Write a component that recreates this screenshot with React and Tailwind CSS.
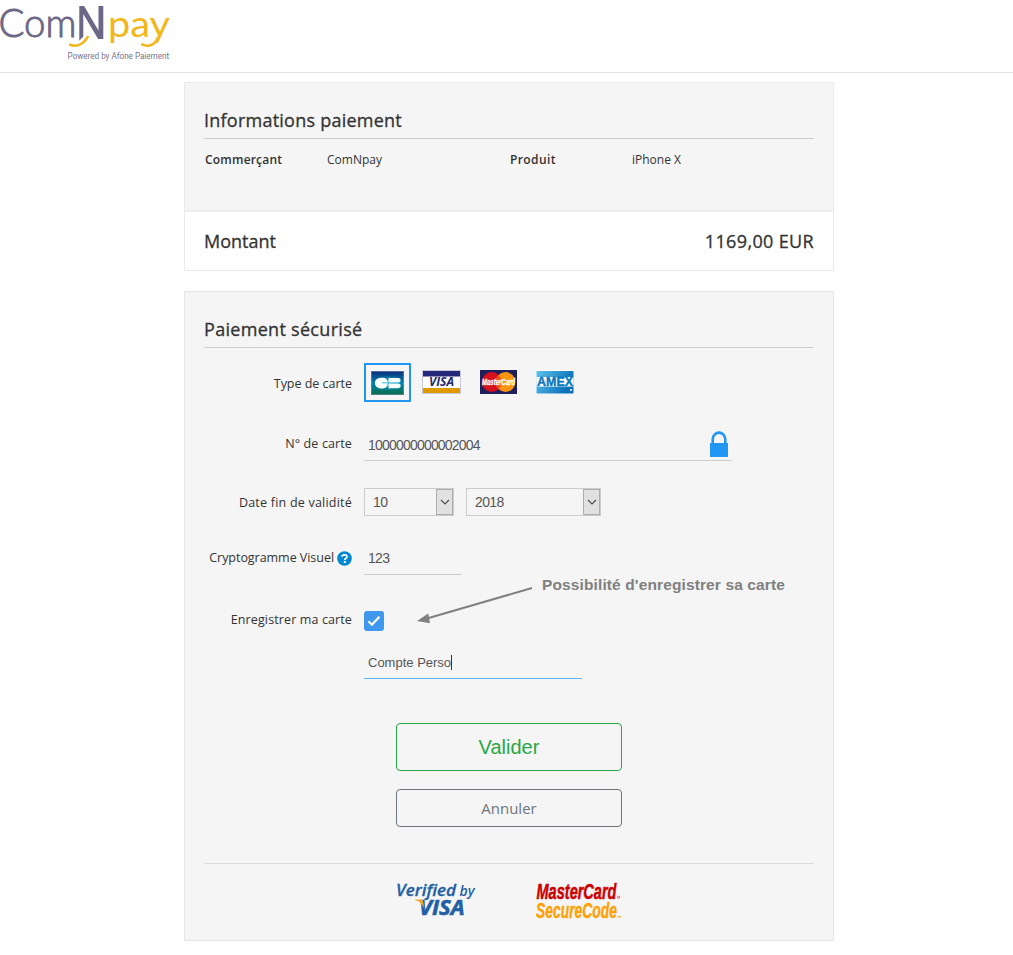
import React from "react";

const humanist = "font-['Trebuchet_MS','Open_Sans',sans-serif]";
const arial = "font-['Liberation_Sans',sans-serif]";

function Logo() {
  return (
    <svg className="block overflow-visible" width="175" height="66" viewBox="0 0 175 66" aria-label="ComNpay">
      <g fontFamily="Lato, sans-serif">
        <text x="-1.5" y="37.3" fontSize="38.5" fontWeight="300" fill="#6b6785" stroke="#6b6785" strokeWidth="0.9" textLength="78" lengthAdjust="spacingAndGlyphs">Com</text>
        <text x="108" y="36.7" fontSize="36.5" fontWeight="400" fill="#f3b71b" textLength="62" lengthAdjust="spacingAndGlyphs">pay</text>
      </g>
      <path d="M79.3 40.7V6h4.8l14.4 24.5V6h4.8v33h-5.2L83.3 14v22.4z" fill="#6b6785" />
      <path d="M69.2 44.5C77 47.6 84 44 88.2 36.2" fill="none" stroke="#f3b71b" strokeWidth="2.6" />
      <path d="M141.2 44.2C149 48 155.5 44.2 158.5 37" fill="none" stroke="#f3b71b" strokeWidth="2.6" />
      <text x="67.6" y="59.4" fontFamily="Roboto, sans-serif" fontSize="8.2" fill="#77738f" textLength="101.5" lengthAdjust="spacingAndGlyphs">Powered by Afone Paiement</text>
    </svg>
  );
}

function CbCard() {
  return (
    <svg width="33" height="24" viewBox="0 0 33 24">
      <defs>
        <linearGradient id="cb" x1="0" y1="0" x2="0" y2="1">
          <stop offset="0" stopColor="#0b2c78" />
          <stop offset="0.5" stopColor="#0083ad" />
          <stop offset="1" stopColor="#0d6b47" />
        </linearGradient>
        <radialGradient id="cbGlow">
          <stop offset="0" stopColor="#13a7d0" />
          <stop offset="1" stopColor="#13a7d0" stopOpacity="0" />
        </radialGradient>
      </defs>
      <rect width="33" height="24" fill="url(#cb)" />
      <ellipse cx="18" cy="12" rx="14" ry="8" fill="url(#cbGlow)" />
      <rect x="0.5" y="0.5" width="32" height="23" fill="none" stroke="#8090b0" strokeOpacity="0.6" />
      <path d="M9.5 6.8H12C15 6.9 16.6 8.5 16.9 11.5H11v.7H16.9C16.6 15.4 15 17.2 12 17.4H9.5A5.7 5.3 0 0 1 9.5 6.8z" fill="#f6ffff" />
      <path d="M17.5 6.9H27.3a2.3 2.3 0 0 1 0 4.6H17.5zM17.5 12.4H27.3a2.4 2.4 0 0 1 0 4.8H17.5z" fill="#f6ffff" />
    </svg>
  );
}

function VisaCard() {
  return (
    <svg width="39" height="24" viewBox="0 0 39 24">
      <rect width="39" height="24" fill="#c8c8d8" />
      <rect x="1" y="1" width="37" height="22" fill="#fff" />
      <rect x="1" y="1" width="37" height="5.5" fill="#24297a" />
      <rect x="1" y="18" width="37" height="5" fill="#df9a00" />
      <text x="7" y="16.3" fontFamily="Open Sans, sans-serif" fontSize="11.5" fontWeight="700" fontStyle="italic" fill="#24296f" textLength="25" lengthAdjust="spacingAndGlyphs">VISA</text>
    </svg>
  );
}

function MasterCard() {
  return (
    <svg className="overflow-visible" width="37" height="24" viewBox="0 0 37 24">
      <rect width="37" height="24" fill="#20205c" />
      <circle cx="11.8" cy="12" r="9.9" fill="#d6101d" />
      <circle cx="25.5" cy="12" r="9.9" fill="#f79512" />
      <path d="M18.65 4.9a9.9 9.9 0 0 1 0 14.2 9.9 9.9 0 0 1 0-14.2z" fill="#e9501a" />
      <text x="2" y="15.2" fontFamily="Liberation Sans, sans-serif" fontSize="8.5" fontWeight="700" fontStyle="italic" fill="#fff" stroke="#fff" strokeWidth="0.3" textLength="33" lengthAdjust="spacingAndGlyphs">MasterCard</text>
    </svg>
  );
}

function AmexCard() {
  return (
    <svg className="overflow-visible" width="38" height="24" viewBox="0 0 38 24">
      <defs>
        <linearGradient id="amex" x1="0" y1="0" x2="1" y2="0.4">
          <stop offset="0" stopColor="#5cc3ea" />
          <stop offset="1" stopColor="#076fb8" />
        </linearGradient>
      </defs>
      <rect width="38" height="24" fill="#fff" />
      <rect x="0.5" y="1" width="37" height="22.5" fill="url(#amex)" />
      <rect x="0.5" y="7" width="37" height="9.6" fill="#fff" />
      <text x="1" y="16.1" fontFamily="Liberation Sans, sans-serif" fontSize="12" fontWeight="700" fill="#0877bb" stroke="#0877bb" strokeWidth="0.4" textLength="36" lengthAdjust="spacingAndGlyphs">AMEX</text>
      <rect x="34" y="19" width="1.8" height="1.8" fill="#fff" />
    </svg>
  );
}

function Row({ label, className, children }) {
  return (
    <div className={"grid grid-cols-[148px_1fr] gap-x-3 " + className}>
      <div className="flex justify-end whitespace-nowrap text-[12.5px] leading-[18px] tracking-[0.12px] text-[#333]">{label}</div>
      <div className={arial + " text-[#555]"}>{children}</div>
    </div>
  );
}

function Select({ value, className }) {
  return (
    <div className={"flex h-7 items-stretch border border-[#ccc] text-[14px] " + className}>
      <span className="flex-1 pl-2 leading-[27px] tracking-[-0.6px]">{value}</span>
      <span className="flex w-[17px] items-center justify-center border border-[#adadad] bg-[#e1e1e1]">
        <svg width="10" height="6" viewBox="0 0 10 6" fill="none" stroke="#505050" strokeWidth="1.2">
          <path d="M1 1l4 4 4-4" />
        </svg>
      </span>
    </div>
  );
}

function SectionTitle({ children, className }) {
  return (
    <h2 className="h-[56px] border-b border-[#ccc] pt-[23px] text-[18px] leading-7 text-[#333] [-webkit-text-stroke:0.3px_#333]">
      <span className={className}>{children}</span>
    </h2>
  );
}

export default function App() {
  return (
    <div className={"h-[955px] w-[1013px] overflow-hidden bg-white " + humanist}>
      <header className="h-[73px] border-b border-[#e3e3e3]">
        <Logo />
      </header>

      <main className="ml-[184px] w-[650px] pt-[9px]">
        <section className="border border-[#ebebeb]">
          <div className="h-[129px] border-b-2 border-[#ececec] bg-[#f5f5f5] px-[19px]">
            <SectionTitle className="tracking-[0.24px]">Informations paiement</SectionTitle>
            <dl className="grid grid-cols-[122px_183px_122px_1fr] pl-px pt-3 text-[12px] leading-[18px] text-[#333]">
              <dt className="font-semibold tracking-[0.2px]">Commerçant</dt>
              <dd>ComNpay</dd>
              <dt className="font-semibold tracking-[0.4px]">Produit</dt>
              <dd>iPhone X</dd>
            </dl>
          </div>
          <div className="flex h-[58px] items-center justify-between bg-white px-[19px] text-[18px] text-[#333] [-webkit-text-stroke:0.3px_#333]">
            <span>Montant</span>
            <span className="tracking-[0.35px]">1169,00 EUR</span>
          </div>
        </section>

        <section className="mt-5 h-[650px] border border-[#e6e6e6] bg-[#f5f5f5] px-[19px]">
          <SectionTitle className="tracking-[0.3px]">Paiement sécurisé</SectionTitle>

          <Row className="h-[54px] items-center pt-[15px]" label={<span className="pt-0.5 tracking-[-0.02px]">Type de carte</span>}>
            <div className="flex items-center">
              <div className="flex h-[39px] w-[47px] items-center justify-center border-2 border-[#2196f3]">
                <CbCard />
              </div>
              <div className="-mt-0.5 ml-[11px]"><VisaCard /></div>
              <div className="-mt-0.5 ml-[19px]"><MasterCard /></div>
              <div className="-mt-0.5 ml-[19px]"><AmexCard /></div>
            </div>
          </Row>

          <Row className="mt-[26px] h-[33px] items-center" label={<span className="pb-0.5">N° de carte</span>}>
            <div className="flex h-[33px] w-[368px] items-center justify-between border-b border-[#ccc] pl-1 pr-1 text-[14px]">
              <span className="pt-0.5 tracking-[-0.8px]">1000000000002004</span>
              <svg width="18" height="27" viewBox="0 0 18 27">
                <path d="M2.7 13V8.2a6.3 6.6 0 0 1 12.6 0V13" fill="none" stroke="#2196f3" strokeWidth="2.6" />
                <rect y="12" width="18" height="14" fill="#2196f3" />
              </svg>
            </div>
          </Row>

          <Row className="mt-[27px] items-center" label={<span className="pt-px tracking-[0.22px]">Date fin de validité</span>}>
            <div className="flex gap-3">
              <Select value="10" className="w-[90px]" />
              <Select value="2018" className="w-[135px]" />
            </div>
          </Row>

          <Row
            className="mt-[26px] h-[33px] items-center"
            label={
              <span className="flex items-center gap-[3px] tracking-[-0.04px]">
                <span className="-mt-0.5">Cryptogramme Visuel</span>
                <svg width="15" height="15" viewBox="0 0 15 15">
                  <circle cx="7.5" cy="7.5" r="7.3" fill="#0288d1" />
                  <path d="M5 5.8C5.1 3.2 10 3.1 10 5.7c0 1.7-2.2 1.6-2.2 3.2" fill="none" stroke="#fff" strokeWidth="1.8" />
                  <rect x="6.8" y="10" width="2" height="2" fill="#fff" />
                </svg>
              </span>
            }
          >
            <div className="h-[33px] w-[98px] border-b border-[#ccc] pl-1 text-[14px] leading-[33px] tracking-[-0.7px]">123</div>
          </Row>

          <Row className="relative mt-9 h-5 items-center" label={<span className="pb-0.5">Enregistrer ma carte</span>}>
            <div className="flex h-5 w-5 items-center justify-center rounded-[3px] bg-[#3f97ee]">
              <svg width="14" height="12" viewBox="0 0 14 12" fill="none" stroke="#fff" strokeWidth="2.2">
                <path d="M1.5 6.3l3.4 3.4 7.5-8" />
              </svg>
            </div>
            <div className="absolute left-[213px] top-[-37px] flex">
              <svg width="116" height="50" viewBox="0 0 116 50">
                <path d="M115 14L10 44.5" stroke="#808080" strokeWidth="2" />
                <path d="M0 47L11.2 39.5 13 49.3z" fill="#808080" />
              </svg>
              <span className="ml-[9px] -mt-px whitespace-nowrap text-[15.5px] font-bold leading-6 tracking-[0.12px] text-[#808080]">
                Possibilité d'enregistrer sa carte
              </span>
            </div>
          </Row>

          <Row className="mt-[15px]" label="">
            <div className="flex h-[33px] w-[218px] items-center border-b border-[#64b5f6] pl-1 pt-px text-[13px]">
              Compte Perso
              <span className="h-[15px] w-px bg-[#333]" />
            </div>
          </Row>

          <div className="mt-11 flex flex-col items-center gap-[18px]">
            <button className={"h-12 w-[226px] rounded border border-[#28a745] text-[20px] text-[#28a745] " + arial}>Valider</button>
            <button className="h-[38px] w-[226px] rounded border border-[#6c757d] text-[15px] text-[#6c757d]">Annuler</button>
          </div>

          <div className="mt-9 border-t border-[#dcdcdc] pl-[190px] pt-[15px]">
            <svg className="overflow-visible" width="240" height="45" viewBox="0 0 240 45" fontFamily="Open Sans, sans-serif" fontStyle="italic">
              <text x="2" y="16.5" fontSize="17" fontWeight="600" fill="#235fa5" stroke="#235fa5" strokeWidth="0.3" textLength="60" lengthAdjust="spacingAndGlyphs">Verified</text>
              <text x="65.5" y="16.5" fontSize="14.5" fontWeight="600" fill="#235fa5" textLength="15" lengthAdjust="spacingAndGlyphs">by</text>
              <text x="25" y="36" fontSize="21" fontWeight="700" fill="#235fa5" stroke="#235fa5" strokeWidth="0.6" textLength="45.5" lengthAdjust="spacingAndGlyphs">VISA</text>
              <path d="M20 20.5h6.3c2.2 0 2.8 1.2 3 3l.8 5.8C28 24.7 25.5 22.2 20 20.5z" fill="#f3a42e" />
              <text x="142.5" y="20" fontFamily="Liberation Sans, sans-serif" fontSize="21.5" fontWeight="700" fill="#c00" stroke="#c00" strokeWidth="0.5" textLength="80" lengthAdjust="spacingAndGlyphs">MasterCard</text>
              <text x="142" y="39.3" fontFamily="Liberation Sans, sans-serif" fontSize="21.5" fontWeight="700" fill="#ff9f00" stroke="#ff9f00" strokeWidth="0.3" textLength="81" lengthAdjust="spacingAndGlyphs">SecureCode</text>
              <circle cx="224.6" cy="18.3" r="1.1" fill="none" stroke="#c00" strokeWidth="0.6" />
              <path d="M223.6 37.8h3.2" stroke="#ff9f00" strokeWidth="1.2" />
            </svg>
          </div>
        </section>
      </main>
    </div>
  );
}
